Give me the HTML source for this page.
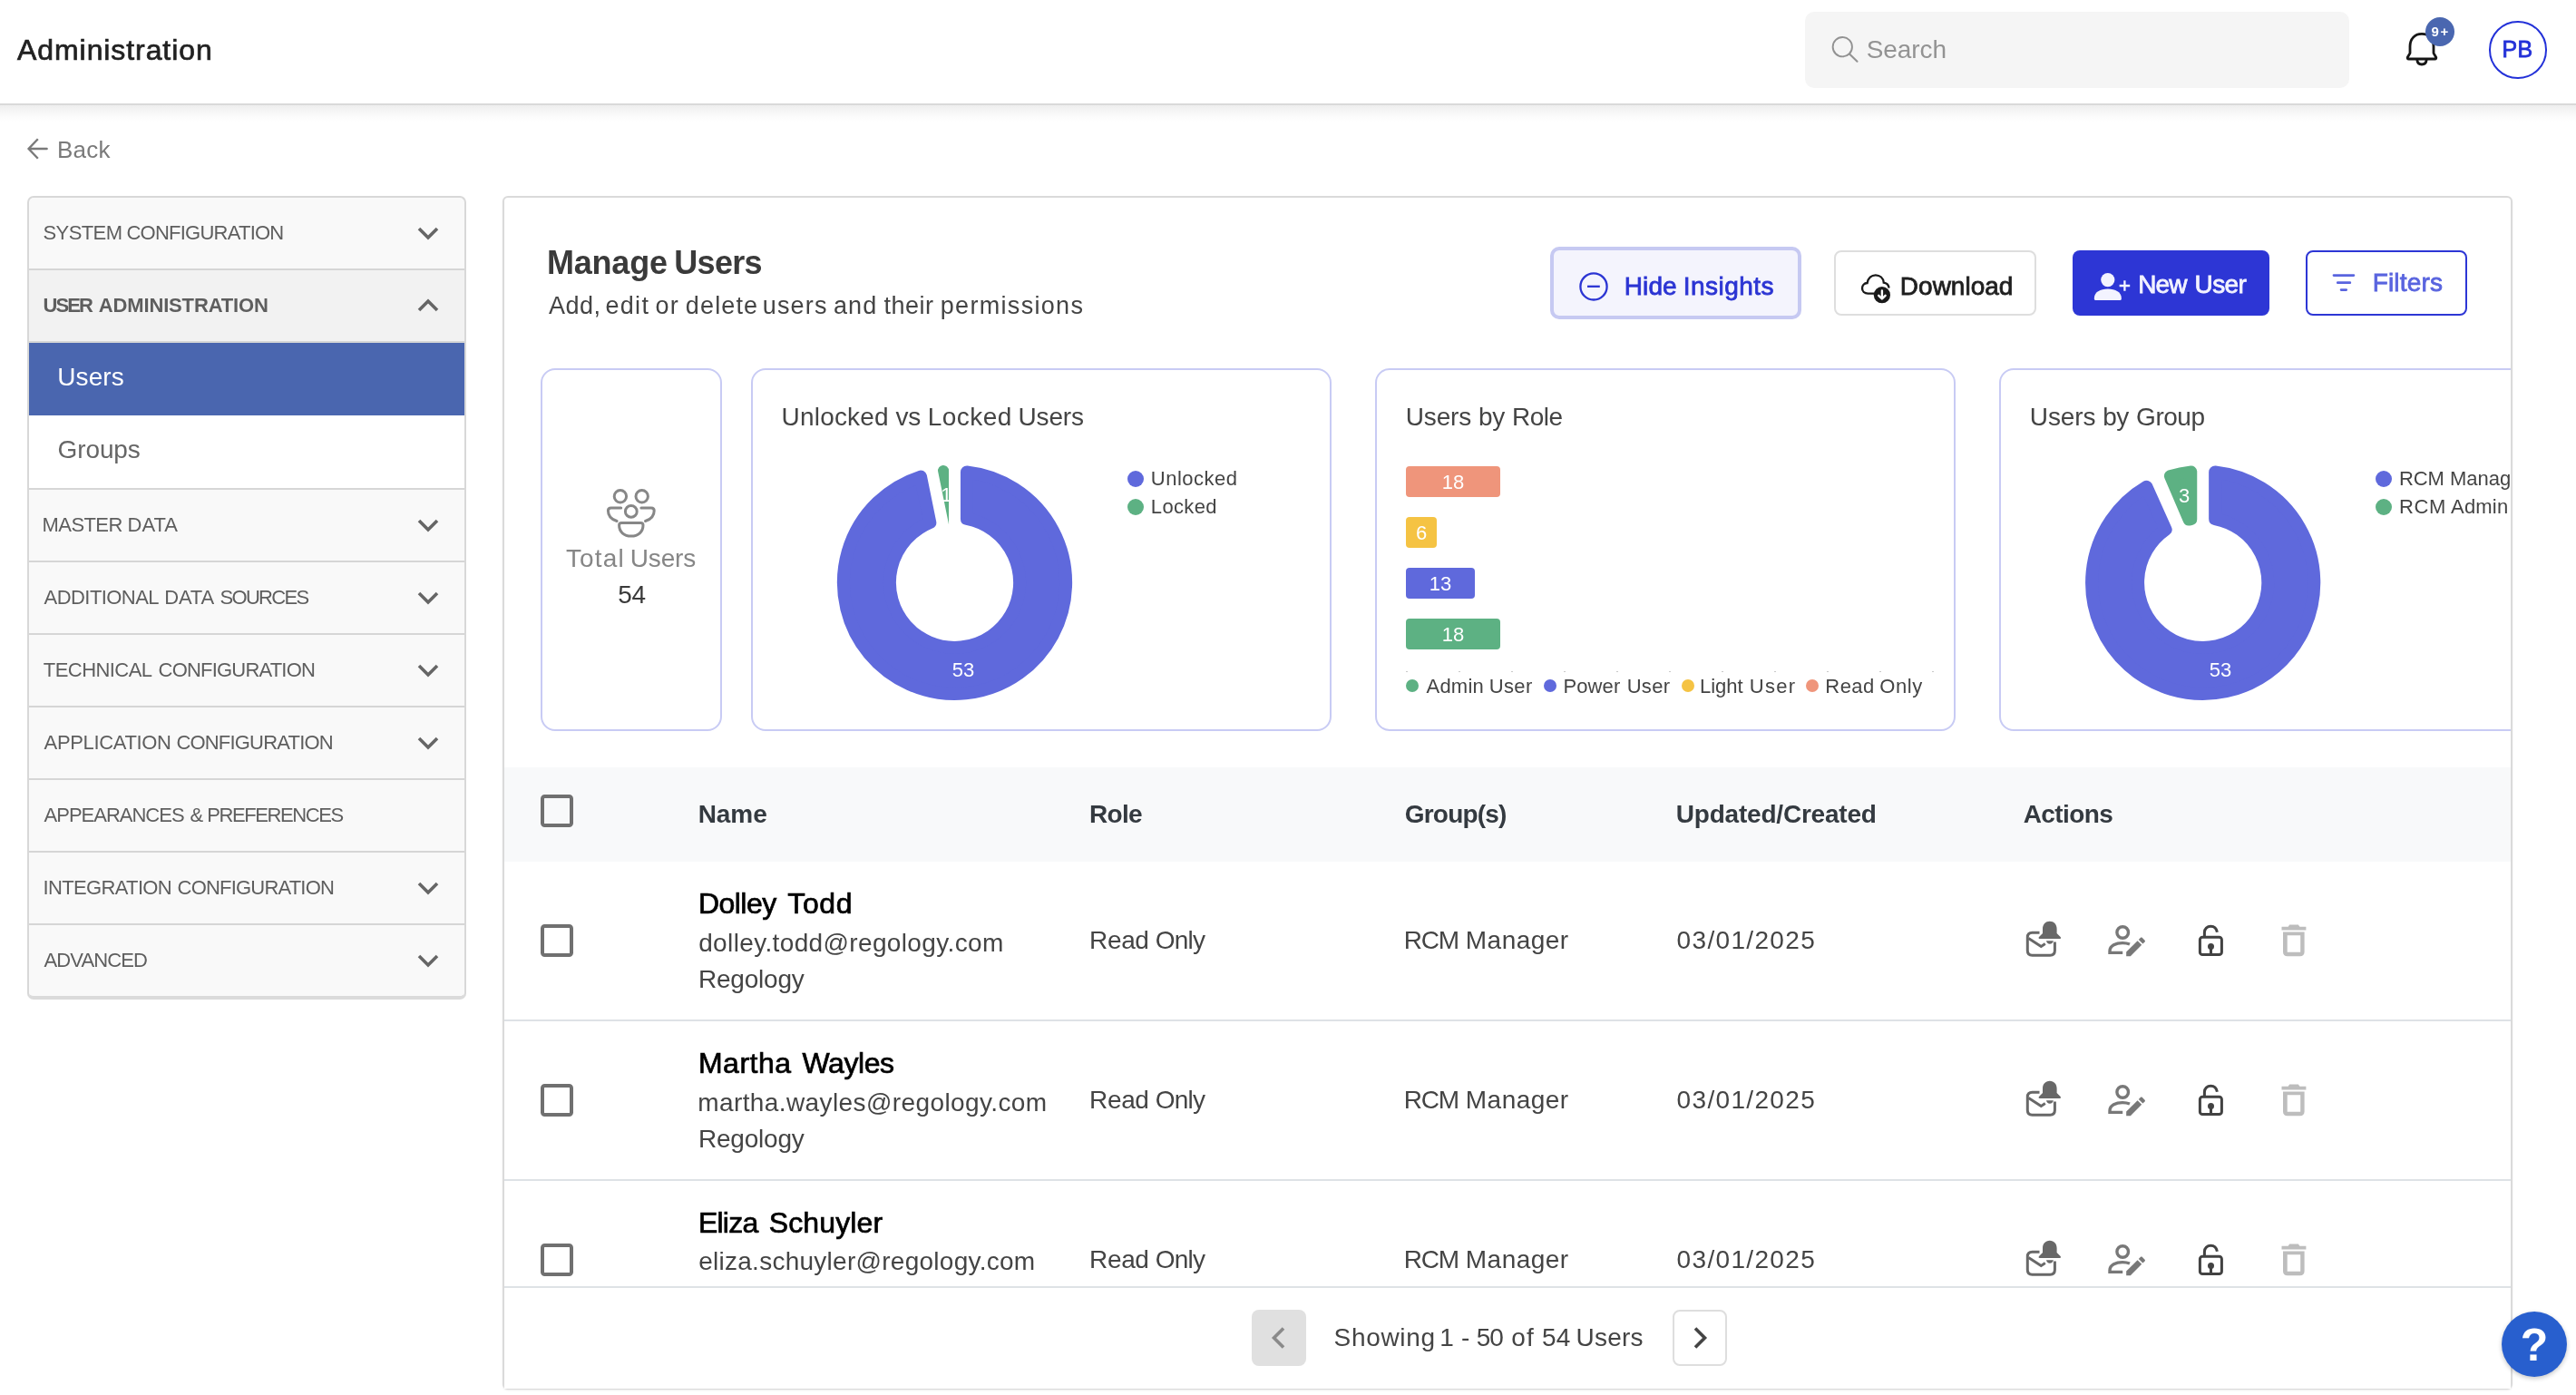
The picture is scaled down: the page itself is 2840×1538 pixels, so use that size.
<!DOCTYPE html>
<html lang="en"><head><meta charset="utf-8"><title>Administration - Manage Users</title>
<style>
html,body{margin:0;padding:0}
body{width:2840px;height:1538px;overflow:hidden;background:#fff;position:relative;font-family:"Liberation Sans",Arial,sans-serif}
.t{position:absolute;white-space:nowrap;display:block}
#txt{position:absolute;left:0;top:0;width:2840px;height:1538px;will-change:transform}
.abs{position:absolute}
svg{position:absolute;overflow:visible}
.ct{font-family:"Liberation Sans",Arial,sans-serif}
</style></head><body>
<div class="abs" style="left:0;top:0;width:2840px;height:114px;background:#fff;border-bottom:2px solid #d9d9d9"></div>
<div class="abs" style="left:0;top:116px;width:2840px;height:18px;background:linear-gradient(#eeeeee,#f3f3f3 25%,#f8f8f8 50%,#fcfcfc 75%,#ffffff)"></div>
<div class="abs" style="left:1990px;top:13px;width:600px;height:84px;background:#f5f5f5;border-radius:10px"></div>
<svg style="left:2018px;top:38px" width="32" height="32" viewBox="0 0 32 32"><circle cx="13.3" cy="13.7" r="10.65" fill="none" stroke="#929292" stroke-width="1.9"/><path d="M21 21.6 L29.5 29.7" stroke="#929292" stroke-width="2.1" stroke-linecap="round"/></svg>
<svg style="left:2650px;top:32px" width="40" height="44" viewBox="0 0 40 44"><path d="M20 5.4 C11.8 5.4 7 11.4 7 19 V26.6 L4.4 31 C3.8 32.2 4.4 33 5.6 33 H34.4 C35.6 33 36.2 32.2 35.6 31 L33 26.6 V19 C33 11.4 28.2 5.4 20 5.4 Z" fill="none" stroke="#161616" stroke-width="2.8" stroke-linejoin="round"/><path d="M14.8 33.6 C15 37 17.2 39 20 39 C22.8 39 25 37 25.2 33.6" fill="none" stroke="#161616" stroke-width="2.8"/></svg>
<div class="abs" style="left:2674px;top:19px;width:32px;height:32px;border-radius:50%;background:#4a67b0"></div>
<div class="abs" style="left:2744px;top:23px;width:59.6px;height:59.6px;border-radius:50%;border:2.2px solid #2331d8;background:#fff"></div>
<svg style="left:30px;top:152px" width="24" height="24" viewBox="0 0 24 24"><path d="M11.8 1.2 L1.6 12 L11.8 22.8" fill="none" stroke="#7a7a7a" stroke-width="2.4" stroke-linejoin="miter"/><path d="M2.5 12 H21.6" fill="none" stroke="#7a7a7a" stroke-width="2.4" stroke-linecap="round"/></svg>
<div class="abs" style="left:30px;top:216px;width:484px;height:886px;background:#f9f9f9;border:2px solid #d8d8d8;border-bottom:4px solid #dbdbdb;border-radius:7px;box-sizing:border-box"></div>
<svg style="left:460px;top:247.8px" width="24" height="18" viewBox="0 0 24 18"><path d="M2 4 L12 14 L22 4" fill="none" stroke="#666" stroke-width="3.6"/></svg>
<div class="abs" style="left:32px;top:298px;width:480px;height:78px;background:#f2f2f2"></div>
<div class="abs" style="left:32px;top:296px;width:480px;height:2px;background:#d6d6d6"></div>
<svg style="left:460px;top:327.8px" width="24" height="18" viewBox="0 0 24 18"><path d="M2 14 L12 4 L22 14" fill="none" stroke="#666" stroke-width="3.6"/></svg>
<div class="abs" style="left:32px;top:378px;width:480px;height:80px;background:#4a66af"></div>
<div class="abs" style="left:32px;top:376px;width:480px;height:2px;background:#d6d6d6"></div>
<div class="abs" style="left:32px;top:458px;width:480px;height:80px;background:#fff"></div>
<div class="abs" style="left:32px;top:538px;width:480px;height:2px;background:#d6d6d6"></div>
<svg style="left:460px;top:569.8px" width="24" height="18" viewBox="0 0 24 18"><path d="M2 4 L12 14 L22 4" fill="none" stroke="#666" stroke-width="3.6"/></svg>
<div class="abs" style="left:32px;top:618px;width:480px;height:2px;background:#d6d6d6"></div>
<svg style="left:460px;top:649.8px" width="24" height="18" viewBox="0 0 24 18"><path d="M2 4 L12 14 L22 4" fill="none" stroke="#666" stroke-width="3.6"/></svg>
<div class="abs" style="left:32px;top:698px;width:480px;height:2px;background:#d6d6d6"></div>
<svg style="left:460px;top:729.8px" width="24" height="18" viewBox="0 0 24 18"><path d="M2 4 L12 14 L22 4" fill="none" stroke="#666" stroke-width="3.6"/></svg>
<div class="abs" style="left:32px;top:778px;width:480px;height:2px;background:#d6d6d6"></div>
<svg style="left:460px;top:809.8px" width="24" height="18" viewBox="0 0 24 18"><path d="M2 4 L12 14 L22 4" fill="none" stroke="#666" stroke-width="3.6"/></svg>
<div class="abs" style="left:32px;top:858px;width:480px;height:2px;background:#d6d6d6"></div>
<div class="abs" style="left:32px;top:938px;width:480px;height:2px;background:#d6d6d6"></div>
<svg style="left:460px;top:969.8px" width="24" height="18" viewBox="0 0 24 18"><path d="M2 4 L12 14 L22 4" fill="none" stroke="#666" stroke-width="3.6"/></svg>
<div class="abs" style="left:32px;top:1018px;width:480px;height:2px;background:#d6d6d6"></div>
<svg style="left:460px;top:1049.8px" width="24" height="18" viewBox="0 0 24 18"><path d="M2 4 L12 14 L22 4" fill="none" stroke="#666" stroke-width="3.6"/></svg>
<div class="abs" style="left:554px;top:216px;width:2216px;height:1316px;box-sizing:border-box;border:2px solid #dadada;border-radius:6px;background:#fff;box-shadow:0 1px 2px rgba(0,0,0,.08)"></div>
<div class="abs" id="clip" style="left:556px;top:218px;width:2212px;height:1313px;overflow:hidden">
<div class="abs" style="left:-556px;top:-218px;width:2840px;height:1538px">
<div class="abs" style="left:1709px;top:272px;width:277px;height:80px;box-sizing:border-box;border:4px solid #c6c9f2;border-radius:10px;background:#f4f4fd"></div>
<svg style="left:1740px;top:299px" width="34" height="34" viewBox="0 0 34 34"><circle cx="17" cy="16.9" r="14.6" fill="none" stroke="#2b34d3" stroke-width="2.3"/><path d="M10 16.8 H23.8" stroke="#2b34d3" stroke-width="2.3"/></svg>
<div class="abs" style="left:2022px;top:276px;width:223px;height:72px;box-sizing:border-box;border:2px solid #dedede;border-radius:8px;background:#fff"></div>
<svg style="left:2050px;top:300px" width="36" height="36" viewBox="0 0 36 36"><path d="M15.8 23.6 H9.4 C5.6 23.6 3 21 3 17.8 C3 14.6 5.4 12.2 8.6 12 C9.6 6.8 13.2 3.4 17.8 3.4 C22.6 3.4 26.2 6.8 26.8 11.6 C29.6 12 31.8 14 32.4 16.6" fill="none" stroke="#1a1a1a" stroke-width="2.4" stroke-linecap="round"/><circle cx="24.9" cy="25.2" r="9.1" fill="#1a1a1a"/><path d="M24.9 20.4 V29 M21.2 25.8 L24.9 29.5 L28.6 25.8" fill="none" stroke="#fff" stroke-width="2.4" stroke-linecap="round" stroke-linejoin="round"/></svg>
<div class="abs" style="left:2285px;top:276px;width:217px;height:72px;border-radius:8px;background:#2d36d5"></div>
<svg style="left:2308px;top:294px" width="44" height="40" viewBox="0 0 44 40"><circle cx="15.8" cy="14.6" r="7.6" fill="#f3f3ff"/><path d="M0.8 35 C0.8 28 7.5 24.5 15.85 24.5 C24.2 24.5 30.9 28 30.9 35 C30.9 36.4 30.3 37 28.9 37 H2.8 C1.4 37 0.8 36.4 0.8 35 Z" fill="#f3f3ff"/><path d="M34.4 15.2 V26.8 M28.6 21 H40.2" stroke="#f3f3ff" stroke-width="2.3"/></svg>
<div class="abs" style="left:2542px;top:276px;width:178px;height:72px;box-sizing:border-box;border:2px solid #2d36d5;border-radius:8px;background:#fff"></div>
<svg style="left:2570px;top:298px" width="28" height="28" viewBox="0 0 28 28"><path d="M3 5.6 H24.9 M7.3 13.7 H20.8 M11.1 21.6 H16.7" stroke="#5964df" stroke-width="2.8" stroke-linecap="round"/></svg>
<div class="abs" style="left:596px;top:406px;width:200px;height:400px;box-sizing:border-box;border:2px solid #c8cbf4;border-radius:16px;background:#fff"></div>
<div class="abs" style="left:828px;top:406px;width:640px;height:400px;box-sizing:border-box;border:2px solid #c8cbf4;border-radius:16px;background:#fff"></div>
<div class="abs" style="left:1516px;top:406px;width:640px;height:400px;box-sizing:border-box;border:2px solid #c8cbf4;border-radius:16px;background:#fff"></div>
<div class="abs" style="left:2204px;top:406px;width:640px;height:400px;box-sizing:border-box;border:2px solid #c8cbf4;border-radius:16px;background:#fff"></div>
<svg style="left:668px;top:538px" width="56" height="56" viewBox="0 0 56 56" fill="none" stroke="#878787" stroke-width="3" stroke-linecap="round">
<circle cx="15.9" cy="9.2" r="6.7"/><circle cx="39.7" cy="9.2" r="6.7"/><circle cx="27.8" cy="25.9" r="6.4"/>
<path d="M16.7 21.9 H5.6 C3.6 21.9 2.4 23.1 2.4 24.9 C2.4 30.4 6.2 34.6 12.1 36.5"/>
<path d="M38.9 21.9 H50 C52 21.9 53.2 23.1 53.2 24.9 C53.2 30.4 49.4 34.6 43.5 36.5"/>
<path d="M17.2 38.4 H38.4 C40 38.4 41 39.4 41 41 C41 48.4 35.6 53 27.8 53 C20 53 14.6 48.4 14.6 41 C14.6 39.4 15.6 38.4 17.2 38.4 Z"/></svg>
<svg style="left:0;top:0" width="2840" height="1538" viewBox="0 0 2840 1538">
<path d="M1065.95 520.44 A122.6 122.6 0 1 1 1015.03 525.57 L1025.30 576.07 A71.6 71.6 0 1 0 1065.95 571.97 Z" fill="#5f69dc" stroke="#5f69dc" stroke-width="14" stroke-linejoin="round"/>
<path d="M1046.05 578.24 L1046.05 518.90 A6 6 0 1 0 1034.17 520.10 Z" fill="#5db183"/>
</svg>
<svg style="left:0;top:0" width="2840" height="1538" viewBox="0 0 2840 1538">
<path d="M2442.15 520.54 A122.6 122.6 0 1 1 2366.48 536.76 L2387.60 583.77 A71.6 71.6 0 1 0 2442.15 572.07 Z" fill="#5f69dc" stroke="#5f69dc" stroke-width="14" stroke-linejoin="round"/>
<path d="M2392.38 524.78 A123.1 123.1 0 0 1 2415.75 519.98 L2415.75 572.49 A71.1 71.1 0 0 0 2413.06 573.04 Z" fill="#5db183" stroke="#5db183" stroke-width="13" stroke-linejoin="round"/>
</svg>
<div class="abs" style="left:1242.9px;top:518.9px;width:18.0px;height:18.0px;border-radius:50%;background:#5f69dc"></div>
<div class="abs" style="left:1242.9px;top:549.9px;width:18.0px;height:18.0px;border-radius:50%;background:#5db183"></div>
<div class="abs" style="left:2619.0px;top:519.0px;width:18.0px;height:18.0px;border-radius:50%;background:#5f69dc"></div>
<div class="abs" style="left:2619.0px;top:550.0px;width:18.0px;height:18.0px;border-radius:50%;background:#5db183"></div>
<div class="abs" style="left:1550px;top:514px;width:104.0px;height:34px;border-radius:4px;background:#ef957b"></div>
<div class="abs" style="left:1550px;top:570px;width:34.4px;height:34px;border-radius:4px;background:#f5c343"></div>
<div class="abs" style="left:1550px;top:626px;width:76.0px;height:34px;border-radius:4px;background:#5f69dc"></div>
<div class="abs" style="left:1550px;top:682px;width:104.0px;height:34px;border-radius:4px;background:#5db183"></div>
<div class="abs" style="left:1549.6px;top:740px;width:2px;height:1px;background:#c8c8c8"></div>
<div class="abs" style="left:1607.6px;top:740px;width:2px;height:1px;background:#c8c8c8"></div>
<div class="abs" style="left:1665.6px;top:740px;width:2px;height:1px;background:#c8c8c8"></div>
<div class="abs" style="left:1723.6px;top:740px;width:2px;height:1px;background:#c8c8c8"></div>
<div class="abs" style="left:1781.6px;top:740px;width:2px;height:1px;background:#c8c8c8"></div>
<div class="abs" style="left:1839.6px;top:740px;width:2px;height:1px;background:#c8c8c8"></div>
<div class="abs" style="left:1897.6px;top:740px;width:2px;height:1px;background:#c8c8c8"></div>
<div class="abs" style="left:1955.6px;top:740px;width:2px;height:1px;background:#c8c8c8"></div>
<div class="abs" style="left:2013.6px;top:740px;width:2px;height:1px;background:#c8c8c8"></div>
<div class="abs" style="left:2071.6px;top:740px;width:2px;height:1px;background:#c8c8c8"></div>
<div class="abs" style="left:2129.6px;top:740px;width:2px;height:1px;background:#c8c8c8"></div>
<div class="abs" style="left:1549.9px;top:748.7px;width:14.2px;height:14.2px;border-radius:50%;background:#5db183"></div>
<div class="abs" style="left:1701.7px;top:748.7px;width:14.2px;height:14.2px;border-radius:50%;background:#5f69dc"></div>
<div class="abs" style="left:1853.8px;top:748.7px;width:14.2px;height:14.2px;border-radius:50%;background:#f5c343"></div>
<div class="abs" style="left:1990.9px;top:748.7px;width:14.2px;height:14.2px;border-radius:50%;background:#ef957b"></div>
<div class="abs" style="left:556px;top:846px;width:2212px;height:104px;background:#f8f9fa"></div>
<div class="abs" style="left:596px;top:876px;width:36px;height:36px;box-sizing:border-box;border:4px solid #707070;border-radius:4.5px"></div>
<div class="abs" style="left:596px;top:1019px;width:36px;height:36px;box-sizing:border-box;border:4px solid #707070;border-radius:4.5px"></div>
<svg style="left:0;top:0" width="2840" height="1538" viewBox="0 0 2840 1538"><g transform="translate(0 0)">
<g fill="none" stroke="#686868" stroke-width="3"><path d="M2248.5 1028.2 H2240.5 C2237 1028.2 2235.3 1030 2235.3 1033.4 V1048 C2235.3 1051.4 2237 1053.2 2240.5 1053.2 H2260.2 C2263.7 1053.2 2265.4 1051.4 2265.4 1048 V1038.5"/><path d="M2236.4 1034.6 L2250.3 1043.4 L2254.8 1040.6"/></g>
<path d="M2259.8 1015.8 C2255 1015.8 2252 1019.4 2252 1024 V1029 L2248 1033 C2247.2 1034 2247.6 1035 2248.8 1035 H2270.8 C2272 1035 2272.4 1034 2271.6 1033 L2267.6 1029 V1024 C2267.6 1019.4 2264.6 1015.8 2259.8 1015.8 Z" fill="#686868"/><path d="M2256 1037.3 H2263.8 C2263.4 1039.6 2262 1040.8 2259.9 1040.8 C2257.8 1040.8 2256.4 1039.6 2256 1037.3 Z" fill="#686868"/>
<g fill="none" stroke="#787878" stroke-width="3.4"><circle cx="2340.2" cy="1028" r="6.3"/><path d="M2340.2 1050.4 H2326 V1048.6 C2326 1042.6 2333 1039.6 2340 1039.6 C2343 1039.6 2345.6 1040 2348 1041"/></g><path d="M2344.2 1054.2 V1049.6 L2356.6 1037.2 L2361.2 1041.8 L2348.8 1054.2 Z" fill="#787878"/><path d="M2357.8 1036 L2360 1033.8 C2360.5 1033.3 2361.2 1033.3 2361.7 1033.8 L2364.6 1036.7 C2365.1 1037.2 2365.1 1037.9 2364.6 1038.4 L2362.4 1040.6 Z" fill="#787878"/>
<g fill="none" stroke="#424242" stroke-width="3"><rect x="2425.4" y="1033.2" width="24" height="19.4" rx="2.8"/><path d="M2430.4 1033 V1028 C2430.4 1024 2433.4 1021.3 2437.4 1021.3 C2440.8 1021.3 2443.6 1023.6 2444.4 1027.8"/><path d="M2437.5 1044 V1052"/></g><circle cx="2437.5" cy="1043.6" r="3.5" fill="#424242"/>
<g fill="#bdbdbd"><path d="M2515.5 1021.7 H2522.6 L2524.2 1019.6 H2533.8 L2535.4 1021.7 H2542.4 V1025.6 H2515.5 Z"/><path fill-rule="evenodd" d="M2517 1027.4 H2540.6 V1049.4 C2540.6 1052.4 2538.8 1054.2 2535.8 1054.2 H2521.8 C2518.8 1054.2 2517 1052.4 2517 1049.4 Z M2521.7 1031.2 V1049.8 H2536.2 V1031.2 Z"/></g>
</g></svg>
<div class="abs" style="left:556px;top:1124px;width:2212px;height:2px;background:#dee2e6"></div>
<div class="abs" style="left:596px;top:1195px;width:36px;height:36px;box-sizing:border-box;border:4px solid #707070;border-radius:4.5px"></div>
<svg style="left:0;top:0" width="2840" height="1538" viewBox="0 0 2840 1538"><g transform="translate(0 176)">
<g fill="none" stroke="#686868" stroke-width="3"><path d="M2248.5 1028.2 H2240.5 C2237 1028.2 2235.3 1030 2235.3 1033.4 V1048 C2235.3 1051.4 2237 1053.2 2240.5 1053.2 H2260.2 C2263.7 1053.2 2265.4 1051.4 2265.4 1048 V1038.5"/><path d="M2236.4 1034.6 L2250.3 1043.4 L2254.8 1040.6"/></g>
<path d="M2259.8 1015.8 C2255 1015.8 2252 1019.4 2252 1024 V1029 L2248 1033 C2247.2 1034 2247.6 1035 2248.8 1035 H2270.8 C2272 1035 2272.4 1034 2271.6 1033 L2267.6 1029 V1024 C2267.6 1019.4 2264.6 1015.8 2259.8 1015.8 Z" fill="#686868"/><path d="M2256 1037.3 H2263.8 C2263.4 1039.6 2262 1040.8 2259.9 1040.8 C2257.8 1040.8 2256.4 1039.6 2256 1037.3 Z" fill="#686868"/>
<g fill="none" stroke="#787878" stroke-width="3.4"><circle cx="2340.2" cy="1028" r="6.3"/><path d="M2340.2 1050.4 H2326 V1048.6 C2326 1042.6 2333 1039.6 2340 1039.6 C2343 1039.6 2345.6 1040 2348 1041"/></g><path d="M2344.2 1054.2 V1049.6 L2356.6 1037.2 L2361.2 1041.8 L2348.8 1054.2 Z" fill="#787878"/><path d="M2357.8 1036 L2360 1033.8 C2360.5 1033.3 2361.2 1033.3 2361.7 1033.8 L2364.6 1036.7 C2365.1 1037.2 2365.1 1037.9 2364.6 1038.4 L2362.4 1040.6 Z" fill="#787878"/>
<g fill="none" stroke="#424242" stroke-width="3"><rect x="2425.4" y="1033.2" width="24" height="19.4" rx="2.8"/><path d="M2430.4 1033 V1028 C2430.4 1024 2433.4 1021.3 2437.4 1021.3 C2440.8 1021.3 2443.6 1023.6 2444.4 1027.8"/><path d="M2437.5 1044 V1052"/></g><circle cx="2437.5" cy="1043.6" r="3.5" fill="#424242"/>
<g fill="#bdbdbd"><path d="M2515.5 1021.7 H2522.6 L2524.2 1019.6 H2533.8 L2535.4 1021.7 H2542.4 V1025.6 H2515.5 Z"/><path fill-rule="evenodd" d="M2517 1027.4 H2540.6 V1049.4 C2540.6 1052.4 2538.8 1054.2 2535.8 1054.2 H2521.8 C2518.8 1054.2 2517 1052.4 2517 1049.4 Z M2521.7 1031.2 V1049.8 H2536.2 V1031.2 Z"/></g>
</g></svg>
<div class="abs" style="left:556px;top:1300px;width:2212px;height:2px;background:#dee2e6"></div>
<div class="abs" style="left:596px;top:1371px;width:36px;height:36px;box-sizing:border-box;border:4px solid #707070;border-radius:4.5px"></div>
<svg style="left:0;top:0" width="2840" height="1538" viewBox="0 0 2840 1538"><g transform="translate(0 352)">
<g fill="none" stroke="#686868" stroke-width="3"><path d="M2248.5 1028.2 H2240.5 C2237 1028.2 2235.3 1030 2235.3 1033.4 V1048 C2235.3 1051.4 2237 1053.2 2240.5 1053.2 H2260.2 C2263.7 1053.2 2265.4 1051.4 2265.4 1048 V1038.5"/><path d="M2236.4 1034.6 L2250.3 1043.4 L2254.8 1040.6"/></g>
<path d="M2259.8 1015.8 C2255 1015.8 2252 1019.4 2252 1024 V1029 L2248 1033 C2247.2 1034 2247.6 1035 2248.8 1035 H2270.8 C2272 1035 2272.4 1034 2271.6 1033 L2267.6 1029 V1024 C2267.6 1019.4 2264.6 1015.8 2259.8 1015.8 Z" fill="#686868"/><path d="M2256 1037.3 H2263.8 C2263.4 1039.6 2262 1040.8 2259.9 1040.8 C2257.8 1040.8 2256.4 1039.6 2256 1037.3 Z" fill="#686868"/>
<g fill="none" stroke="#787878" stroke-width="3.4"><circle cx="2340.2" cy="1028" r="6.3"/><path d="M2340.2 1050.4 H2326 V1048.6 C2326 1042.6 2333 1039.6 2340 1039.6 C2343 1039.6 2345.6 1040 2348 1041"/></g><path d="M2344.2 1054.2 V1049.6 L2356.6 1037.2 L2361.2 1041.8 L2348.8 1054.2 Z" fill="#787878"/><path d="M2357.8 1036 L2360 1033.8 C2360.5 1033.3 2361.2 1033.3 2361.7 1033.8 L2364.6 1036.7 C2365.1 1037.2 2365.1 1037.9 2364.6 1038.4 L2362.4 1040.6 Z" fill="#787878"/>
<g fill="none" stroke="#424242" stroke-width="3"><rect x="2425.4" y="1033.2" width="24" height="19.4" rx="2.8"/><path d="M2430.4 1033 V1028 C2430.4 1024 2433.4 1021.3 2437.4 1021.3 C2440.8 1021.3 2443.6 1023.6 2444.4 1027.8"/><path d="M2437.5 1044 V1052"/></g><circle cx="2437.5" cy="1043.6" r="3.5" fill="#424242"/>
<g fill="#bdbdbd"><path d="M2515.5 1021.7 H2522.6 L2524.2 1019.6 H2533.8 L2535.4 1021.7 H2542.4 V1025.6 H2515.5 Z"/><path fill-rule="evenodd" d="M2517 1027.4 H2540.6 V1049.4 C2540.6 1052.4 2538.8 1054.2 2535.8 1054.2 H2521.8 C2518.8 1054.2 2517 1052.4 2517 1049.4 Z M2521.7 1031.2 V1049.8 H2536.2 V1031.2 Z"/></g>
</g></svg>
<div class="abs" style="left:556px;top:1418px;width:2212px;height:113px;background:#fff;border-top:2px solid #dee2e6"></div>
<div class="abs" style="left:1380px;top:1444px;width:60px;height:62px;border-radius:8px;background:#e0e0e0"></div>
<svg style="left:1400px;top:1462px" width="20" height="26" viewBox="0 0 20 26"><path d="M15 2.5 L4.5 13 L15 23.5" fill="none" stroke="#8a8a8a" stroke-width="3.6"/></svg>
<div class="abs" style="left:1844px;top:1444px;width:60px;height:62px;box-sizing:border-box;border:2px solid #dedede;border-radius:8px;background:#fff"></div>
<svg style="left:1864px;top:1462px" width="20" height="26" viewBox="0 0 20 26"><path d="M5 2.5 L15.5 13 L5 23.5" fill="none" stroke="#444" stroke-width="3.6"/></svg>
</div></div>
<div class="abs" style="left:2758px;top:1446px;width:72px;height:72px;border-radius:50%;background:#285fce;box-shadow:0 2px 5px rgba(0,0,0,.22)"></div>
<div id="txt">
<span class="t" id="t1" style="left:19.08px;top:39px;font-size:32px;line-height:32px;color:#212121;-webkit-text-stroke:0.7px #212121;letter-spacing:0.914px;">Administration</span>
<span class="t" id="t2" style="left:2057.63px;top:41px;font-size:28px;line-height:28px;color:#939393;letter-spacing:-0.046px;">Search</span>
<span class="t" id="t3" style="left:2680.41px;top:27px;font-size:15px;line-height:15px;color:#fff;font-weight:700;letter-spacing:1.688px;">9+</span>
<span class="t" id="t4" style="left:2758.58px;top:42px;font-size:25px;line-height:25px;color:#2331d8;-webkit-text-stroke:0.8px #2331d8;letter-spacing:0.320px;">PB</span>
<span class="t" id="t5" style="left:62.90px;top:152px;font-size:26px;line-height:26px;color:#7a7a7a;letter-spacing:0.232px;">Back</span>
<span><span class="t" id="t6" style="left:47.50px;top:246px;font-size:22px;line-height:22px;color:#5e5e5e;letter-spacing:-0.600px;">SYSTEM</span>
 <span class="t" id="t7" style="left:139.40px;top:246px;font-size:22px;line-height:22px;color:#5e5e5e;letter-spacing:-0.754px;">CONFIGURATION</span>
</span>
<span><span class="t" id="t8" style="left:47.50px;top:326px;font-size:22px;line-height:22px;color:#5e5e5e;font-weight:700;letter-spacing:-1.928px;">USER</span>
 <span class="t" id="t9" style="left:108.83px;top:326px;font-size:22px;line-height:22px;color:#5e5e5e;font-weight:700;letter-spacing:-0.156px;">ADMINISTRATION</span>
</span>
<span><span class="t" id="t10" style="left:63.30px;top:402px;font-size:28px;line-height:28px;color:#fff;letter-spacing:0.075px;">Users</span>
</span>
<span><span class="t" id="t11" style="left:63.60px;top:482px;font-size:28px;line-height:28px;color:#666;letter-spacing:-0.120px;">Groups</span>
</span>
<span><span class="t" id="t12" style="left:46.59px;top:568px;font-size:22px;line-height:22px;color:#5e5e5e;letter-spacing:-0.585px;">MASTER</span>
 <span class="t" id="t13" style="left:140.59px;top:568px;font-size:22px;line-height:22px;color:#5e5e5e;letter-spacing:-0.055px;">DATA</span>
</span>
<span><span class="t" id="t14" style="left:48.60px;top:648px;font-size:22px;line-height:22px;color:#5e5e5e;letter-spacing:-0.569px;">ADDITIONAL</span>
 <span class="t" id="t15" style="left:181.29px;top:648px;font-size:22px;line-height:22px;color:#5e5e5e;letter-spacing:-0.188px;">DATA</span>
 <span class="t" id="t16" style="left:242.60px;top:648px;font-size:22px;line-height:22px;color:#5e5e5e;letter-spacing:-1.717px;">SOURCES</span>
</span>
<span><span class="t" id="t17" style="left:47.85px;top:728px;font-size:22px;line-height:22px;color:#5e5e5e;letter-spacing:-0.568px;">TECHNICAL</span>
 <span class="t" id="t18" style="left:174.60px;top:728px;font-size:22px;line-height:22px;color:#5e5e5e;letter-spacing:-0.804px;">CONFIGURATION</span>
</span>
<span><span class="t" id="t19" style="left:48.60px;top:808px;font-size:22px;line-height:22px;color:#5e5e5e;letter-spacing:-0.355px;">APPLICATION</span>
 <span class="t" id="t20" style="left:194.40px;top:808px;font-size:22px;line-height:22px;color:#5e5e5e;letter-spacing:-0.804px;">CONFIGURATION</span>
</span>
<span><span class="t" id="t21" style="left:48.60px;top:888px;font-size:22px;line-height:22px;color:#5e5e5e;letter-spacing:-1.006px;">APPEARANCES</span>
 <span class="t" id="t22" style="left:209.47px;top:888px;font-size:22px;line-height:22px;color:#5e5e5e;letter-spacing:-1.198px;">&amp;</span>
 <span class="t" id="t23" style="left:228.29px;top:888px;font-size:22px;line-height:22px;color:#5e5e5e;letter-spacing:-1.409px;">PREFERENCES</span>
</span>
<span><span class="t" id="t24" style="left:47.50px;top:968px;font-size:22px;line-height:22px;color:#5e5e5e;letter-spacing:-0.650px;">INTEGRATION</span>
 <span class="t" id="t25" style="left:195.60px;top:968px;font-size:22px;line-height:22px;color:#5e5e5e;letter-spacing:-0.804px;">CONFIGURATION</span>
</span>
<span><span class="t" id="t26" style="left:48.60px;top:1048px;font-size:22px;line-height:22px;color:#5e5e5e;letter-spacing:-0.914px;">ADVANCED</span>
</span>
<span><span class="t" id="t27" style="left:602.90px;top:272px;font-size:36px;line-height:36px;color:#3a3a3a;font-weight:700;letter-spacing:-0.180px;">Manage</span>
 <span class="t" id="t28" style="left:743.30px;top:272px;font-size:36px;line-height:36px;color:#3a3a3a;font-weight:700;letter-spacing:-0.685px;">Users</span>
</span>
<span><span class="t" id="t29" style="left:604.90px;top:324px;font-size:27px;line-height:27px;color:#444;letter-spacing:0.487px;">Add,</span>
 <span class="t" id="t30" style="left:667.40px;top:324px;font-size:27px;line-height:27px;color:#444;letter-spacing:1.318px;">edit</span>
 <span class="t" id="t31" style="left:722.50px;top:324px;font-size:27px;line-height:27px;color:#444;letter-spacing:1.300px;">or</span>
 <span class="t" id="t32" style="left:755.80px;top:324px;font-size:27px;line-height:27px;color:#444;letter-spacing:1.151px;">delete</span>
 <span class="t" id="t33" style="left:840.73px;top:324px;font-size:27px;line-height:27px;color:#444;letter-spacing:1.194px;">users</span>
 <span class="t" id="t34" style="left:919.00px;top:324px;font-size:27px;line-height:27px;color:#444;letter-spacing:1.088px;">and</span>
 <span class="t" id="t35" style="left:974.60px;top:324px;font-size:27px;line-height:27px;color:#444;letter-spacing:0.444px;">their</span>
 <span class="t" id="t36" style="left:1036.72px;top:324px;font-size:27px;line-height:27px;color:#444;letter-spacing:1.318px;">permissions</span>
</span>
<span><span class="t" id="t37" style="left:1790.65px;top:302px;font-size:28px;line-height:28px;color:#2b34d3;-webkit-text-stroke:0.8px #2b34d3;letter-spacing:0.149px;">Hide</span>
 <span class="t" id="t38" style="left:1855.80px;top:302px;font-size:28px;line-height:28px;color:#2b34d3;-webkit-text-stroke:0.8px #2b34d3;letter-spacing:0.457px;">Insights</span>
</span>
<span class="t" id="t39" style="left:2094.85px;top:302px;font-size:28px;line-height:28px;color:#1f1f1f;-webkit-text-stroke:0.8px #1f1f1f;letter-spacing:-0.002px;">Download</span>
<span><span class="t" id="t40" style="left:2357.15px;top:300px;font-size:28px;line-height:28px;color:#f3f3ff;-webkit-text-stroke:0.8px #f3f3ff;letter-spacing:-0.898px;">New</span>
 <span class="t" id="t41" style="left:2419.52px;top:300px;font-size:28px;line-height:28px;color:#f3f3ff;-webkit-text-stroke:0.8px #f3f3ff;letter-spacing:-0.608px;">User</span>
</span>
<span class="t" id="t42" style="left:2615.65px;top:298px;font-size:28px;line-height:28px;color:#5964df;-webkit-text-stroke:0.8px #5964df;letter-spacing:0.175px;">Filters</span>
<span><span class="t" id="t43" style="left:623.89px;top:602px;font-size:28px;line-height:28px;color:#868686;letter-spacing:1.186px;">Total</span>
 <span class="t" id="t44" style="left:694.70px;top:602px;font-size:28px;line-height:28px;color:#868686;letter-spacing:-0.125px;">Users</span>
</span>
<span class="t" id="t45" style="left:681.30px;top:642px;font-size:28px;line-height:28px;color:#3a3a3a;letter-spacing:-0.425px;">54</span>
<span><span class="t" id="t46" style="left:861.60px;top:446px;font-size:28px;line-height:28px;color:#444;letter-spacing:0.186px;">Unlocked</span>
 <span class="t" id="t47" style="left:987.60px;top:446px;font-size:28px;line-height:28px;color:#444;letter-spacing:-0.400px;">vs</span>
 <span class="t" id="t48" style="left:1022.70px;top:446px;font-size:28px;line-height:28px;color:#444;letter-spacing:0.493px;">Locked</span>
 <span class="t" id="t49" style="left:1122.60px;top:446px;font-size:28px;line-height:28px;color:#444;letter-spacing:-0.200px;">Users</span>
</span>
<span><span class="t" id="t50" style="left:1549.80px;top:446px;font-size:28px;line-height:28px;color:#444;letter-spacing:-0.175px;">Users</span>
 <span class="t" id="t51" style="left:1630.08px;top:446px;font-size:28px;line-height:28px;color:#444;letter-spacing:-0.408px;">by</span>
 <span class="t" id="t52" style="left:1666.90px;top:446px;font-size:28px;line-height:28px;color:#444;letter-spacing:-0.450px;">Role</span>
</span>
<span><span class="t" id="t53" style="left:2237.80px;top:446px;font-size:28px;line-height:28px;color:#444;letter-spacing:-0.125px;">Users</span>
 <span class="t" id="t54" style="left:2318.18px;top:446px;font-size:28px;line-height:28px;color:#444;letter-spacing:-0.408px;">by</span>
 <span class="t" id="t55" style="left:2355.10px;top:446px;font-size:28px;line-height:28px;color:#444;letter-spacing:-0.475px;">Group</span>
</span>
<span class="t" id="t56" style="left:1043.30px;top:535px;font-size:22px;line-height:22px;color:#fff;transform:translateX(-50%);">1</span>
<span class="t" id="t57" style="left:1062.00px;top:728px;font-size:22px;line-height:22px;color:#fff;transform:translateX(-50%);">53</span>
<span class="t" id="t58" style="left:2408.20px;top:536px;font-size:22px;line-height:22px;color:#fff;transform:translateX(-50%);">3</span>
<span class="t" id="t59" style="left:2448.00px;top:728px;font-size:22px;line-height:22px;color:#fff;transform:translateX(-50%);">53</span>
<span class="t" id="t60" style="left:1268.85px;top:517px;font-size:22px;line-height:22px;color:#444;letter-spacing:0.473px;">Unlocked</span>
<span class="t" id="t61" style="left:1268.79px;top:548px;font-size:22px;line-height:22px;color:#444;letter-spacing:0.361px;">Locked</span>
<span class="t" id="t62" style="left:2644.89px;top:517px;font-size:22px;line-height:22px;color:#444;letter-spacing:-0.029px;clip-path:inset(-5px 20.5px -5px 0);">RCM Manager</span>
<span><span class="t" id="t63" style="left:2644.89px;top:548px;font-size:22px;line-height:22px;color:#444;letter-spacing:0.737px;">RCM</span>
 <span class="t" id="t64" style="left:2702.10px;top:548px;font-size:22px;line-height:22px;color:#444;letter-spacing:0.175px;">Admin</span>
</span>
<span class="t" id="t65" style="left:1602.00px;top:521px;font-size:22px;line-height:22px;color:#fff;transform:translateX(-50%);">18</span>
<span class="t" id="t66" style="left:1567.20px;top:577px;font-size:22px;line-height:22px;color:#fff;transform:translateX(-50%);">6</span>
<span class="t" id="t67" style="left:1588.00px;top:633px;font-size:22px;line-height:22px;color:#fff;transform:translateX(-50%);">13</span>
<span class="t" id="t68" style="left:1602.00px;top:689px;font-size:22px;line-height:22px;color:#fff;transform:translateX(-50%);">18</span>
<span><span class="t" id="t69" style="left:1572.50px;top:746px;font-size:22px;line-height:22px;color:#444;letter-spacing:0.225px;">Admin</span>
 <span class="t" id="t70" style="left:1641.85px;top:746px;font-size:22px;line-height:22px;color:#444;letter-spacing:0.318px;">User</span>
</span>
<span><span class="t" id="t71" style="left:1723.39px;top:746px;font-size:22px;line-height:22px;color:#444;letter-spacing:0.151px;">Power</span>
 <span class="t" id="t72" style="left:1793.65px;top:746px;font-size:22px;line-height:22px;color:#444;letter-spacing:0.318px;">User</span>
</span>
<span><span class="t" id="t73" style="left:1874.09px;top:746px;font-size:22px;line-height:22px;color:#444;letter-spacing:-0.044px;">Light</span>
 <span class="t" id="t74" style="left:1928.75px;top:746px;font-size:22px;line-height:22px;color:#444;letter-spacing:1.251px;">User</span>
</span>
<span><span class="t" id="t75" style="left:2012.29px;top:746px;font-size:22px;line-height:22px;color:#444;letter-spacing:0.463px;">Read</span>
 <span class="t" id="t76" style="left:2072.20px;top:746px;font-size:22px;line-height:22px;color:#444;letter-spacing:0.592px;">Only</span>
</span>
<span class="t" id="t77" style="left:769.66px;top:884px;font-size:28px;line-height:28px;color:#343a40;font-weight:700;letter-spacing:-0.073px;">Name</span>
<span class="t" id="t78" style="left:1201.06px;top:884px;font-size:28px;line-height:28px;color:#343a40;font-weight:700;letter-spacing:-0.721px;">Role</span>
<span class="t" id="t79" style="left:1548.80px;top:884px;font-size:28px;line-height:28px;color:#343a40;font-weight:700;letter-spacing:-0.800px;">Group(s)</span>
<span class="t" id="t80" style="left:1847.75px;top:884px;font-size:28px;line-height:28px;color:#343a40;font-weight:700;letter-spacing:-0.205px;">Updated/Created</span>
<span class="t" id="t81" style="left:2230.75px;top:884px;font-size:28px;line-height:28px;color:#343a40;font-weight:700;letter-spacing:-0.606px;">Actions</span>
<span><span class="t" id="t82" style="left:769.90px;top:980px;font-size:32px;line-height:32px;color:#000;-webkit-text-stroke:0.7px #000;letter-spacing:-0.514px;">Dolley</span>
 <span class="t" id="t83" style="left:868.30px;top:980px;font-size:32px;line-height:32px;color:#000;-webkit-text-stroke:0.7px #000;letter-spacing:0.633px;">Todd</span>
</span>
<span class="t" id="t84" style="left:770.20px;top:1026px;font-size:28px;line-height:28px;color:#444;letter-spacing:0.361px;">dolley.todd@regology.com</span>
<span class="t" id="t85" style="left:769.90px;top:1066px;font-size:28px;line-height:28px;color:#444;letter-spacing:-0.203px;">Regology</span>
<span><span class="t" id="t86" style="left:1201.00px;top:1023px;font-size:28px;line-height:28px;color:#444;letter-spacing:-0.333px;">Read</span>
 <span class="t" id="t87" style="left:1273.80px;top:1023px;font-size:28px;line-height:28px;color:#444;letter-spacing:-0.810px;">Only</span>
</span>
<span><span class="t" id="t88" style="left:1547.80px;top:1023px;font-size:28px;line-height:28px;color:#444;letter-spacing:-1.200px;">RCM</span>
 <span class="t" id="t89" style="left:1615.80px;top:1023px;font-size:28px;line-height:28px;color:#444;letter-spacing:0.474px;">Manager</span>
</span>
<span class="t" id="t90" style="left:1848.60px;top:1023px;font-size:28px;line-height:28px;color:#444;letter-spacing:1.333px;">03/01/2025</span>
<span><span class="t" id="t91" style="left:769.90px;top:1156px;font-size:32px;line-height:32px;color:#000;-webkit-text-stroke:0.7px #000;letter-spacing:0.520px;">Martha</span>
 <span class="t" id="t92" style="left:884.45px;top:1156px;font-size:32px;line-height:32px;color:#000;-webkit-text-stroke:0.7px #000;letter-spacing:-0.430px;">Wayles</span>
</span>
<span class="t" id="t93" style="left:769.25px;top:1202px;font-size:28px;line-height:28px;color:#444;letter-spacing:0.398px;">martha.wayles@regology.com</span>
<span class="t" id="t94" style="left:769.90px;top:1242px;font-size:28px;line-height:28px;color:#444;letter-spacing:-0.203px;">Regology</span>
<span><span class="t" id="t95" style="left:1201.00px;top:1199px;font-size:28px;line-height:28px;color:#444;letter-spacing:-0.333px;">Read</span>
 <span class="t" id="t96" style="left:1273.80px;top:1199px;font-size:28px;line-height:28px;color:#444;letter-spacing:-0.810px;">Only</span>
</span>
<span><span class="t" id="t97" style="left:1547.80px;top:1199px;font-size:28px;line-height:28px;color:#444;letter-spacing:-1.200px;">RCM</span>
 <span class="t" id="t98" style="left:1615.80px;top:1199px;font-size:28px;line-height:28px;color:#444;letter-spacing:0.474px;">Manager</span>
</span>
<span class="t" id="t99" style="left:1848.60px;top:1199px;font-size:28px;line-height:28px;color:#444;letter-spacing:1.333px;">03/01/2025</span>
<span><span class="t" id="t100" style="left:769.90px;top:1332px;font-size:32px;line-height:32px;color:#000;-webkit-text-stroke:0.7px #000;letter-spacing:-0.750px;">Eliza</span>
 <span class="t" id="t101" style="left:847.70px;top:1332px;font-size:32px;line-height:32px;color:#000;-webkit-text-stroke:0.7px #000;letter-spacing:0.127px;">Schuyler</span>
</span>
<span class="t" id="t102" style="left:770.20px;top:1377px;font-size:28px;line-height:28px;color:#444;letter-spacing:0.265px;">eliza.schuyler@regology.com</span>
<span><span class="t" id="t103" style="left:1201.00px;top:1375px;font-size:28px;line-height:28px;color:#444;letter-spacing:-0.333px;">Read</span>
 <span class="t" id="t104" style="left:1273.80px;top:1375px;font-size:28px;line-height:28px;color:#444;letter-spacing:-0.810px;">Only</span>
</span>
<span><span class="t" id="t105" style="left:1547.80px;top:1375px;font-size:28px;line-height:28px;color:#444;letter-spacing:-1.200px;">RCM</span>
 <span class="t" id="t106" style="left:1615.80px;top:1375px;font-size:28px;line-height:28px;color:#444;letter-spacing:0.474px;">Manager</span>
</span>
<span class="t" id="t107" style="left:1848.60px;top:1375px;font-size:28px;line-height:28px;color:#444;letter-spacing:1.333px;">03/01/2025</span>
<span><span class="t" id="t108" style="left:1470.53px;top:1461px;font-size:28px;line-height:28px;color:#444;letter-spacing:0.689px;">Showing</span>
 <span class="t" id="t109" style="left:1587.20px;top:1461px;font-size:28px;line-height:28px;color:#444;letter-spacing:-1.602px;">1</span>
 <span class="t" id="t110" style="left:1611.10px;top:1461px;font-size:28px;line-height:28px;color:#444;letter-spacing:0.363px;">-</span>
 <span class="t" id="t111" style="left:1627.80px;top:1461px;font-size:28px;line-height:28px;color:#444;letter-spacing:-1.000px;">50</span>
 <span class="t" id="t112" style="left:1666.30px;top:1461px;font-size:28px;line-height:28px;color:#444;letter-spacing:1.137px;">of</span>
 <span class="t" id="t113" style="left:1700.10px;top:1461px;font-size:28px;line-height:28px;color:#444;letter-spacing:-0.025px;">54</span>
 <span class="t" id="t114" style="left:1737.50px;top:1461px;font-size:28px;line-height:28px;color:#444;letter-spacing:0.250px;">Users</span>
</span>
<span class="t" id="t115" style="left:2794.00px;top:1458px;font-size:50px;line-height:50px;color:#fff;font-weight:700;transform:translateX(-50%);">?</span>
</div>
</body></html>
